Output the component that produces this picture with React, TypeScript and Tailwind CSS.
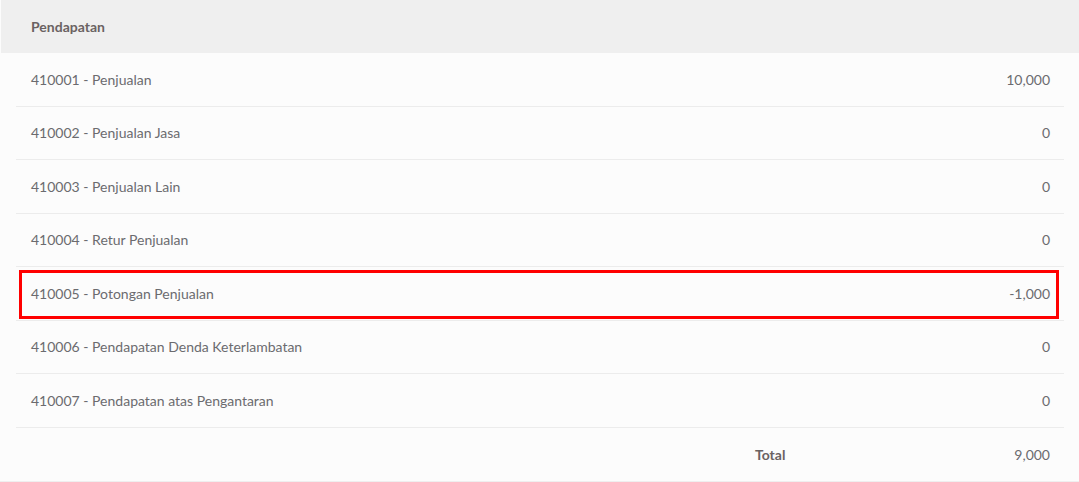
import React from 'react';

const rows = [
  { name: '410001 - Penjualan', value: '10,000' },
  { name: '410002 - Penjualan Jasa', value: '0' },
  { name: '410003 - Penjualan Lain', value: '0' },
  { name: '410004 - Retur Penjualan', value: '0' },
  { name: '410005 - Potongan Penjualan', value: '-1,000', highlight: true },
  { name: '410006 - Pendapatan Denda Keterlambatan', value: '0' },
  { name: '410007 - Pendapatan atas Pengantaran', value: '0' },
];

const App: React.FC = () => {
  return (
    <div className="w-[1079px] h-[482px] bg-[#fcfcfc] text-[14px] text-[#6b6b6f] font-['Lato','Liberation_Sans',sans-serif] overflow-hidden">
      {/* header */}
      <div className="ml-px h-[53px] bg-[#efefef] flex items-center pl-[30px]">
        <span className="font-bold text-[#6a6262]">Pendapatan</span>
      </div>

      <div className="px-4 pr-[15px]">
        {rows.map((r, i) => (
          <div key={i} className="h-[53.5px] border-b border-[#ececec] relative flex items-center justify-between px-[15px]">
            {r.highlight && (
              <div className="absolute left-[3px] right-[5px] top-[3px] bottom-[1px] border-[3px] border-[#ff0000]" />
            )}
            <span>{r.name}</span>
            <span className="mr-[-1px]">{r.value}</span>
          </div>
        ))}
        <div className="h-[53px] flex items-center pl-[739px] pr-[15px]">
          <span className="font-bold text-[#6a6262]">Total</span>
          <span className="ml-auto mr-[-1px]">9,000</span>
        </div>
      </div>
      <div className="h-[2px] bg-[#efefef]" />
    </div>
  );
};

export default App;
